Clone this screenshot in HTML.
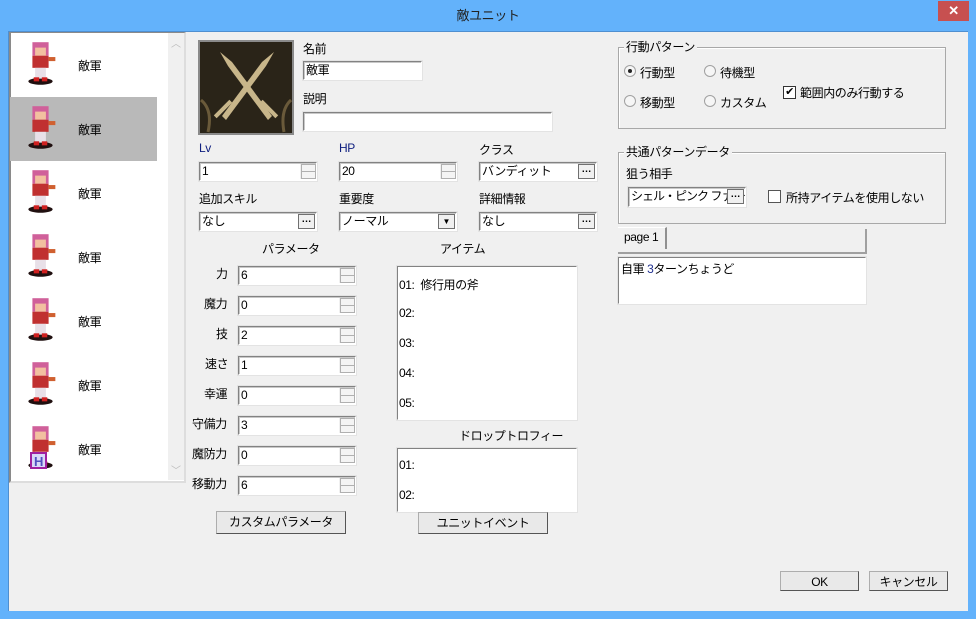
<!DOCTYPE html>
<html><head><meta charset="utf-8">
<style>
*{box-sizing:border-box;margin:0;padding:0}
body{width:976px;height:619px;overflow:hidden;background:#63b2fb;font-family:"Liberation Sans","Noto Sans CJK JP",sans-serif;font-size:12px;color:#000;position:relative;letter-spacing:-0.4px}
.a{position:absolute}
#title{left:0;top:0;width:976px;height:31px;text-align:center;line-height:32px;font-size:13px;color:#222}
#close{left:938px;top:1px;width:31px;height:20px;background:#c75050;color:#fff;text-align:center;line-height:20px;font-size:13px;font-weight:bold}
#client{left:8px;top:31px;width:960px;height:580px;background:#f0f0f0;border-top:1px solid #4f8fd0;border-left:1px solid #4f8fd0}
.in{position:absolute;background:#fff;border-top:1px solid #828282;border-left:1px solid #828282;border-right:1px solid #fff;border-bottom:1px solid #fff;box-shadow:inset 1px 1px 0 #c8c8c8,0 0 0 1px #e3e3e3;height:19px;line-height:16px;padding-left:2px;font-size:12px;white-space:nowrap;overflow:hidden}
.spin{position:absolute;right:1px;top:1px;width:15px;height:15px;background:#f0f0f0}
.spin:before,.spin:after{content:"";position:absolute;left:1px;width:13px;height:6px;border:1px solid #b0b0b0;background:#f4f4f4}
.spin:before{top:0}.spin:after{top:7px}
.dot{position:absolute;right:1px;top:1px;width:17px;height:15px;background:#f0f0f0;border:1px solid #707070;font-size:10px;line-height:9px;text-align:center;font-weight:bold;letter-spacing:0}
.lbl{position:absolute;white-space:nowrap}
.btn{position:absolute;background:#e9e9e9;border:1px solid #adadad;border-right-color:#555;border-bottom-color:#555;text-align:center;line-height:20px;font-size:12px}
.box{position:absolute;background:#fff;border-top:1px solid #828282;border-left:1px solid #828282;border-right:1px solid #fff;border-bottom:1px solid #fff;box-shadow:0 0 0 1px #e3e3e3}
.grp{position:absolute;border:1px solid #a8a8a8;box-shadow:1px 1px 0 #fff inset}
.leg{position:absolute;top:-8px;left:5px;background:#f0f0f0;padding:0 2px;line-height:14px}
.rad{position:absolute;width:12px;height:12px;border-radius:50%;border:1px solid #a0a0a0;background:#f6f6f6}
.chk{position:absolute;width:13px;height:13px;border:1px solid #333;background:#fff;font-size:11px;line-height:11px;text-align:center}
.row{position:absolute;left:10px;width:147px;height:64px}
.nm{position:absolute;left:68px;top:24px}
</style></head><body>
<div class="a" id="title">敵ユニット</div>
<div class="a" id="close">✕</div>
<div class="a" id="client"></div>

<div class="a" style="left:9px;top:32px;width:177px;height:451px;background:#fff;border-left:2px solid #8a8a8a;border-top:1px solid #8a8a8a;border-bottom:2px solid #ddd;border-right:2px solid #ddd"></div>
<div class="a" style="left:168px;top:33px;width:16px;height:447px;background:#f0f0f0"></div>
<div class="a" style="left:171px;top:35px;color:#bbb;font-size:10px">︿</div>
<div class="a" style="left:171px;top:462px;color:#bbb;font-size:10px">﹀</div>
<div class="row" style="top:97px;background:#b9b9b9"></div>
<svg class="a" style="left:10px;top:33px" width="158" height="448">
<defs><g id="s">
<ellipse cx="30" cy="41" rx="9" ry="2.5" fill="#201010"/>
<rect x="24" y="12" width="12" height="10" fill="#d0609a"/>
<rect x="26" y="16" width="8" height="6" fill="#f2c0a0"/>
<rect x="24" y="22" width="12" height="9" fill="#c03030"/>
<rect x="36" y="23" width="5" height="3" fill="#d06030"/>
<rect x="26" y="31" width="8" height="8" fill="#e8e0e8"/>
<rect x="25" y="38" width="4" height="3" fill="#d02020"/><rect x="31" y="38" width="4" height="3" fill="#d02020"/>
</g></defs>
<g transform="translate(-10,-7) scale(1.35)"><use href="#s"/></g>
<g transform="translate(-10,57) scale(1.35)"><use href="#s"/></g>
<g transform="translate(-10,121) scale(1.35)"><use href="#s"/></g>
<g transform="translate(-10,185) scale(1.35)"><use href="#s"/></g>
<g transform="translate(-10,249) scale(1.35)"><use href="#s"/></g>
<g transform="translate(-10,313) scale(1.35)"><use href="#s"/></g>
<g transform="translate(-10,377) scale(1.35)"><use href="#s"/></g>
<rect x="21" y="420" width="15" height="15" fill="#d8d8f8" stroke="#a020a0" stroke-width="2"/>
<text x="24" y="433" font-size="13" fill="#5050c0" font-weight="bold" font-family="Liberation Sans">H</text>
</svg>
<div class="nm a" style="left:78px;top:57px">敵軍</div>
<div class="nm a" style="left:78px;top:121px">敵軍</div>
<div class="nm a" style="left:78px;top:185px">敵軍</div>
<div class="nm a" style="left:78px;top:249px">敵軍</div>
<div class="nm a" style="left:78px;top:313px">敵軍</div>
<div class="nm a" style="left:78px;top:377px">敵軍</div>
<div class="nm a" style="left:78px;top:441px">敵軍</div>

<svg class="a" style="left:198px;top:40px" width="96" height="95">
<rect width="96" height="95" fill="#8a8a8a"/><rect x="2" y="2" width="92" height="91" fill="#2a2418"/>
<g fill="#c8b68a"><polygon points="22,12 34,22 74,76 70,80 30,26"/><polygon points="76,12 64,22 24,76 28,80 68,26"/>
<rect x="14" y="67" width="22" height="4" transform="rotate(-45 25 69)"/><rect x="60" y="67" width="22" height="4" transform="rotate(45 71 69)"/></g>
<path d="M3 60 Q15 70 10 92 M93 60 Q82 70 86 92" stroke="#6a5a3a" stroke-width="3" fill="none"/>
</svg>

<div class="lbl" style="left:303px;top:40px">名前</div>
<div class="in" style="left:303px;top:61px;width:119px">敵軍</div>
<div class="lbl" style="left:303px;top:90px">説明</div>
<div class="in" style="left:303px;top:112px;width:249px"></div>

<div class="lbl" style="left:199px;top:141px;color:#102080">Lv</div>
<div class="in" style="left:199px;top:162px;width:118px">1<span class="spin"></span></div>
<div class="lbl" style="left:339px;top:141px;color:#102080">HP</div>
<div class="in" style="left:339px;top:162px;width:118px">20<span class="spin"></span></div>
<div class="lbl" style="left:479px;top:141px">クラス</div>
<div class="in" style="left:479px;top:162px;width:118px">バンディット<span class="dot">…</span></div>

<div class="lbl" style="left:199px;top:190px">追加スキル</div>
<div class="in" style="left:199px;top:212px;width:118px">なし<span class="dot">…</span></div>
<div class="lbl" style="left:339px;top:190px">重要度</div>
<div class="in" style="left:339px;top:212px;width:118px">ノーマル<span class="dot" style="font-size:8px;line-height:13px">▼</span></div>
<div class="lbl" style="left:479px;top:190px">詳細情報</div>
<div class="in" style="left:479px;top:212px;width:118px">なし<span class="dot">…</span></div>

<div class="lbl" style="left:262px;top:240px">パラメータ</div>
<div class="lbl" style="left:440px;top:240px">アイテム</div>

<div class="lbl" style="left:216px;top:265px">力</div>
<div class="lbl" style="left:204px;top:295px">魔力</div>
<div class="lbl" style="left:216px;top:325px">技</div>
<div class="lbl" style="left:205px;top:355px">速さ</div>
<div class="lbl" style="left:204px;top:385px">幸運</div>
<div class="lbl" style="left:192px;top:415px">守備力</div>
<div class="lbl" style="left:192px;top:445px">魔防力</div>
<div class="lbl" style="left:192px;top:475px">移動力</div>
<div class="in" style="left:238px;top:266px;width:118px">6<span class="spin"></span></div>
<div class="in" style="left:238px;top:296px;width:118px">0<span class="spin"></span></div>
<div class="in" style="left:238px;top:326px;width:118px">2<span class="spin"></span></div>
<div class="in" style="left:238px;top:356px;width:118px">1<span class="spin"></span></div>
<div class="in" style="left:238px;top:386px;width:118px">0<span class="spin"></span></div>
<div class="in" style="left:238px;top:416px;width:118px">3<span class="spin"></span></div>
<div class="in" style="left:238px;top:446px;width:118px">0<span class="spin"></span></div>
<div class="in" style="left:238px;top:476px;width:118px">6<span class="spin"></span></div>

<div class="box" style="left:397px;top:266px;width:180px;height:154px"></div>
<div class="lbl" style="left:399px;top:276px">01:&nbsp; 修行用の斧</div>
<div class="lbl" style="left:399px;top:306px">02:</div>
<div class="lbl" style="left:399px;top:336px">03:</div>
<div class="lbl" style="left:399px;top:366px">04:</div>
<div class="lbl" style="left:399px;top:396px">05:</div>
<div class="lbl" style="left:459px;top:427px">ドロップトロフィー</div>
<div class="box" style="left:397px;top:448px;width:180px;height:64px"></div>
<div class="lbl" style="left:399px;top:458px">01:</div>
<div class="lbl" style="left:399px;top:488px">02:</div>

<div class="btn" style="left:216px;top:511px;width:130px;height:23px">カスタムパラメータ</div>
<div class="btn" style="left:418px;top:512px;width:130px;height:22px">ユニットイベント</div>

<div class="grp" style="left:618px;top:47px;width:328px;height:82px"><span class="leg">行動パターン</span></div>
<div class="rad" style="left:624px;top:65px"><span style="position:absolute;left:3px;top:3px;width:4px;height:4px;background:#222;border-radius:50%"></span></div>
<div class="lbl" style="left:640px;top:64px">行動型</div>
<div class="rad" style="left:704px;top:65px"></div>
<div class="lbl" style="left:720px;top:64px">待機型</div>
<div class="rad" style="left:624px;top:95px"></div>
<div class="lbl" style="left:640px;top:94px">移動型</div>
<div class="rad" style="left:704px;top:95px"></div>
<div class="lbl" style="left:720px;top:94px">カスタム</div>
<div class="chk" style="left:783px;top:86px">✔</div>
<div class="lbl" style="left:800px;top:84px">範囲内のみ行動する</div>

<div class="grp" style="left:618px;top:152px;width:328px;height:72px"><span class="leg">共通パターンデータ</span></div>
<div class="lbl" style="left:626px;top:165px">狙う相手</div>
<div class="in" style="left:628px;top:187px;width:118px;height:20px;letter-spacing:-1px">シェル・ピンク ファイター<span class="dot">…</span></div>
<div class="chk" style="left:768px;top:190px;border-color:#555"></div>
<div class="lbl" style="left:786px;top:189px">所持アイテムを使用しない</div>

<div class="a" style="left:618px;top:229px;width:249px;height:25px;border-bottom:2px solid #a0a0a0;border-right:2px solid #a0a0a0;background:#f0f0f0"></div>
<div class="a" style="left:618px;top:227px;width:49px;height:22px;background:#f0f0f0;border-right:2px solid #909090;border-top:1px solid #fff;font-size:12px;line-height:18px;padding-left:6px;color:#000">page 1</div>
<div class="box" style="left:618px;top:257px;width:248px;height:47px"></div>
<div class="lbl" style="left:621px;top:260px">自軍 <span style="color:#203090">3</span>ターンちょうど</div>

<div class="btn" style="left:780px;top:571px;width:79px;height:20px">OK</div>
<div class="btn" style="left:869px;top:571px;width:79px;height:20px">キャンセル</div>
</body></html>
